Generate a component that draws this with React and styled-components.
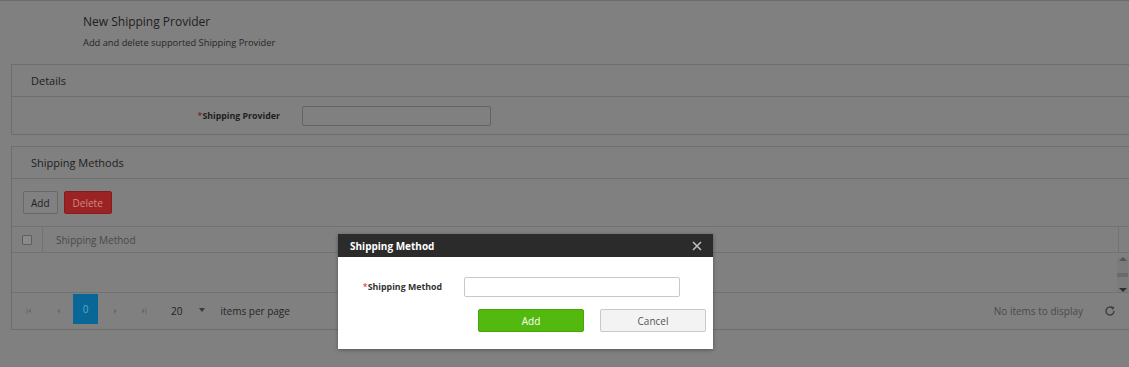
import React from 'react'
import styled, { createGlobalStyle } from 'styled-components'

const GlobalStyle = createGlobalStyle`
  body {
    margin: 0;
    background: #808080;
    font-family: "Open Sans", "Noto Sans", sans-serif;
    overflow: hidden;
  }
`;

const Page = styled.div`
  position: relative;
  height: 367px;
  border-top: 1px solid #6c6c6c;
  box-sizing: border-box;
`;

const Heading = styled.div`
  padding: 13px 0 0 83px;
  height: 50px;
  box-sizing: border-box;
`;

const Title = styled.h1`
  margin: 0;
  font-size: 12px;
  font-weight: 400;
  color: #1e1e1e;
  line-height: 16px;
`;

const Subtitle = styled.p`
  margin: 7px 0 0;
  font-size: 9.3px;
  color: #262626;
  line-height: 12px;
`;

const Panel = styled.section`
  margin: ${(p) => p.top}px -20px 0 11px;
  border: 1px solid #6e6e6e;
  border-right: none;
`;

const PanelHeader = styled.div`
  height: 31px;
  padding-left: 19px;
  display: flex;
  align-items: center;
  border-bottom: 1px solid #6e6e6e;
  font-size: 11px;
  color: #1e1e1e;
`;

const FieldRow = styled.div`
  height: 37px;
  display: flex;
  align-items: center;
`;

const Label = styled.label`
  width: ${(p) => p.w}px;
  margin-right: 22px;
  text-align: right;
  font-size: 8.8px;
  font-weight: 700;
  color: ${(p) => (p.light ? '#333' : '#1e1e1e')};
`;

const Star = styled.span`
  color: ${(p) => (p.light ? '#e02020' : '#7a1010')};
  font-weight: 400;
`;

const Input = styled.div`
  width: ${(p) => p.w}px;
  height: 18px;
  border: 1px solid ${(p) => (p.light ? '#c8c8c8' : '#646464')};
  border-radius: 2px;
  background: ${(p) => (p.light ? '#fff' : '#808080')};
`;

const Toolbar = styled.div`
  height: 47px;
  padding-left: 11px;
  display: flex;
  align-items: center;
  gap: 6px;
`;

const ToolButton = styled.button`
  height: 23px;
  padding: 0 ${(p) => (p.danger ? 8 : 7)}px;
  border: 1px solid ${(p) => (p.danger ? '#851d1d' : '#686868')};
  border-radius: 2px;
  background: ${(p) => (p.danger ? '#9c2323' : '#818181')};
  color: ${(p) => (p.danger ? '#cf8a8a' : '#222')};
  font-family: inherit;
  font-size: 10px;
`;

const GridHeader = styled.div`
  height: 25px;
  display: flex;
  align-items: stretch;
  border-top: 1px solid #727272;
  border-bottom: 1px solid #727272;
`;

const CheckCell = styled.div`
  width: 30px;
  display: flex;
  align-items: center;
  justify-content: center;
  border-right: 1px solid #727272;
`;

const Check = styled.span`
  width: 8px;
  height: 8px;
  border: 1px solid #5e5e5e;
  border-radius: 1px;
  background: #8a8a8a;
`;

const ColumnTitle = styled.div`
  flex: 1;
  display: flex;
  align-items: center;
  padding-left: 13px;
  font-size: 10px;
  color: #4a4a4a;
`;

const ScrollHead = styled.div`
  width: 30px;
  border-left: 1px solid #727272;
`;

const GridBody = styled.div`
  height: 39px;
  display: flex;
  justify-content: flex-end;
  border-bottom: 1px solid #727272;
`;

const ScrollBar = styled.div`
  width: 11px;
  margin-right: 21px;
  margin-top: 4px;
  height: 35px;
  display: flex;
  flex-direction: column;
  align-items: center;
  justify-content: space-between;
  background: #7b7b7b;
`;

const Arrow = styled.span`
  width: 0;
  height: 0;
  border-left: 4px solid transparent;
  border-right: 4px solid transparent;
  ${(p) => (p.up ? 'border-bottom: 4px solid #555;' : 'border-top: 4px solid #2e2e2e;')}
`;

const Thumb = styled.span`
  width: 11px;
  height: 4px;
  background: #6a6a6a;
`;

const Pager = styled.div`
  height: 36px;
  display: flex;
  align-items: center;
  padding-left: 2px;
`;

const PageIcon = styled.span`
  width: ${(p) => p.w}px;
  display: flex;
  justify-content: center;
`;

const ActivePage = styled.span`
  width: 25px;
  height: 30px;
  margin-top: -5px;
  display: flex;
  align-items: center;
  justify-content: center;
  background: #086796;
  color: #5ea9cf;
  font-size: 10px;
`;

const PageSize = styled.span`
  margin-left: 17px;
  font-size: 10px;
  color: #1e1e1e;
`;

const Caret = styled.span`
  margin-left: 17px;
  width: 0;
  height: 0;
  border-left: 3px solid transparent;
  border-right: 3px solid transparent;
  border-top: 4px solid #3a3a3a;
  margin-top: -3px;
`;

const PagerText = styled.span`
  margin-left: ${(p) => p.left || 0}px;
  font-size: 10px;
  color: ${(p) => p.color || '#262626'};
`;

const Spacer = styled.div`
  flex: 1;
`;

const Refresh = styled.svg`
  margin: 0 33px 0 21px;
`;

const Modal = styled.div`
  position: absolute;
  left: 338px;
  top: 233px;
  width: 375px;
  height: 115px;
  background: #fff;
  box-shadow: 0 1px 4px rgba(0, 0, 0, 0.35);
`;

const ModalHeader = styled.div`
  height: 23px;
  background: #2b2b2b;
  display: flex;
  align-items: center;
  justify-content: space-between;
  padding: 0 11px 0 12px;
  color: #fff;
  font-size: 10px;
  font-weight: 700;
`;

const ModalRow = styled.div`
  display: flex;
  align-items: center;
  margin-top: ${(p) => p.top}px;
`;

const ModalButton = styled.button`
  width: 106px;
  height: 23px;
  margin-left: ${(p) => p.left}px;
  border: 1px solid ${(p) => (p.primary ? '#45a50b' : '#c9c9c9')};
  border-radius: 2px;
  background: ${(p) => (p.primary ? '#54b90f' : '#f3f3f3')};
  color: ${(p) => (p.primary ? '#fff' : '#555')};
  font-family: inherit;
  font-size: 10px;
`;

function CloseIcon() {
  return (
    <svg width="10" height="10" viewBox="0 0 10 10">
      <path d="M1 1L9 9M9 1L1 9" stroke="#bdbdbd" strokeWidth="1.6" />
    </svg>
  )
}

function PagerArrow({ dir, bar }) {
  const left = dir === 'left'
  return (
    <svg width="7" height="8" viewBox="0 0 7 8">
      {left ? <path d="M5 1.5L2 4L5 6.5Z" fill="#6a6a6a" /> : <path d="M2 1.5L5 4L2 6.5Z" fill="#6a6a6a" />}
      {bar && <rect x={left ? 0.5 : 5.5} y="1" width="1" height="6" fill="#6a6a6a" />}
    </svg>
  )
}

export default function App() {
  return (
    <Page>
      <GlobalStyle />
      <Heading>
        <Title>New Shipping Provider</Title>
        <Subtitle>Add and delete supported Shipping Provider</Subtitle>
      </Heading>

      <Panel top={13}>
        <PanelHeader>Details</PanelHeader>
        <FieldRow>
          <Label w={268}><Star>*</Star>Shipping Provider</Label>
          <Input w={187} />
        </FieldRow>
      </Panel>

      <Panel top={11}>
        <PanelHeader>Shipping Methods</PanelHeader>
        <Toolbar>
          <ToolButton>Add</ToolButton>
          <ToolButton danger>Delete</ToolButton>
        </Toolbar>
        <GridHeader>
          <CheckCell><Check /></CheckCell>
          <ColumnTitle>Shipping Method</ColumnTitle>
          <ScrollHead />
        </GridHeader>
        <GridBody>
          <ScrollBar>
            <Arrow up />
            <Thumb />
            <Arrow />
          </ScrollBar>
        </GridBody>
        <Pager>
          <PageIcon w={30}><PagerArrow dir="left" bar /></PageIcon>
          <PageIcon w={29}><PagerArrow dir="left" /></PageIcon>
          <ActivePage>0</ActivePage>
          <PageIcon w={34}><PagerArrow dir="right" /></PageIcon>
          <PageIcon w={22}><PagerArrow dir="right" bar /></PageIcon>
          <PageSize>20</PageSize>
          <Caret />
          <PagerText left={15}>items per page</PagerText>
          <Spacer />
          <PagerText color="#4a4a4a">No items to display</PagerText>
          <Refresh width="12" height="12" viewBox="0 0 12 12">
            <path d="M10 6A4 4 0 1 1 8.6 3" fill="none" stroke="#3e3e3e" strokeWidth="1.4" />
            <path d="M7 1.2L10.4 2.2L8.8 5.2Z" fill="#3e3e3e" />
          </Refresh>
        </Pager>
      </Panel>

      <Modal>
        <ModalHeader>
          Shipping Method
          <CloseIcon />
        </ModalHeader>
        <ModalRow top={20}>
          <Label light w={104}><Star light>*</Star>Shipping Method</Label>
          <Input light w={214} />
        </ModalRow>
        <ModalRow top={12}>
          <ModalButton primary left={140}>Add</ModalButton>
          <ModalButton left={16}>Cancel</ModalButton>
        </ModalRow>
      </Modal>
    </Page>
  )
}
